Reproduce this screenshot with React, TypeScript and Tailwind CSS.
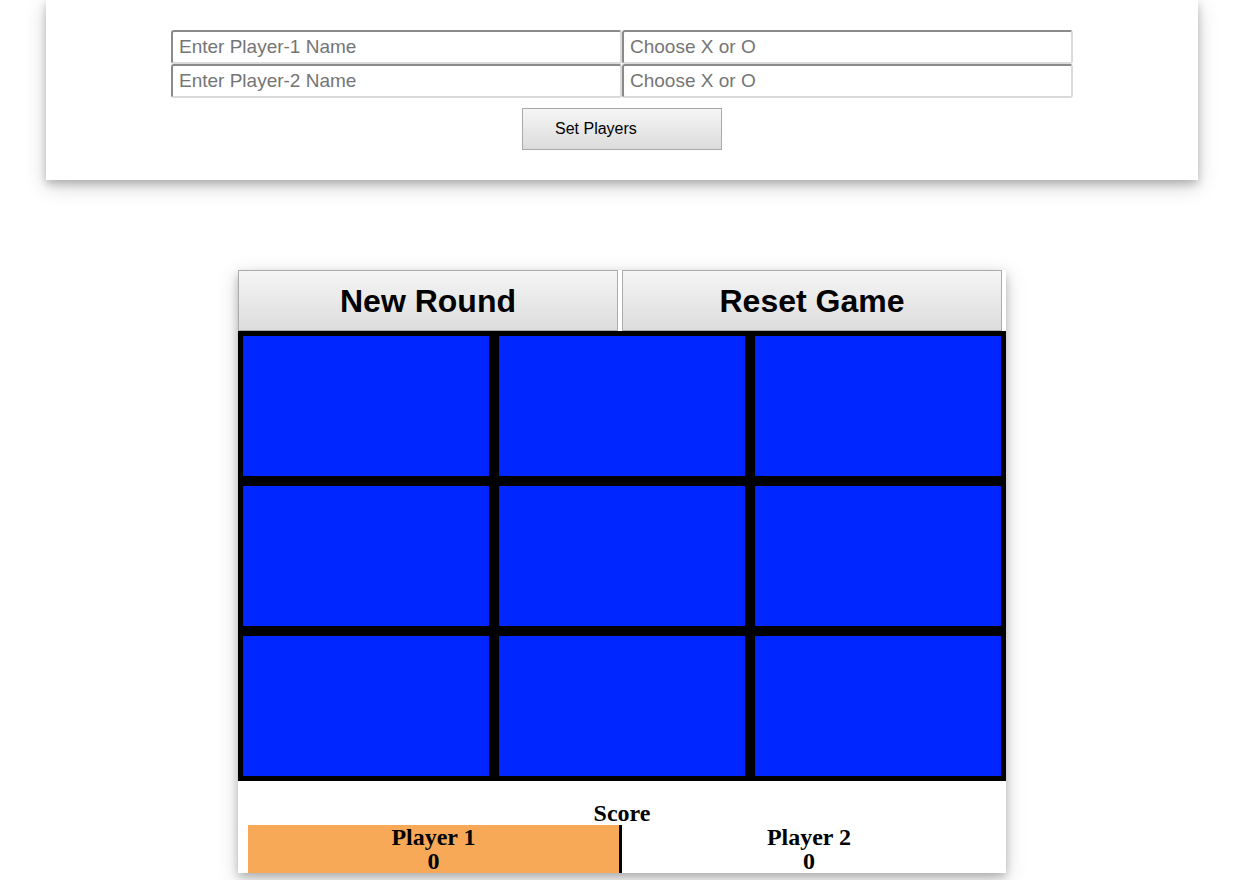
import React from 'react';

const inputCls =
  'h-[34px] w-[451px] rounded-[3px] border-2 border-t-[#8a8a8a] border-l-[#8a8a8a] border-r-[#dadada] border-b-[#dadada] bg-white px-[6px] text-[19px] text-black placeholder:text-[#757575] outline-none';

const cardShadow = 'shadow-[0_4px_8px_0_rgba(0,0,0,0.2),0_6px_20px_0_rgba(0,0,0,0.19)]';

export default function App() {
  const cells = Array.from({ length: 9 }, (_, i) => i);

  return (
    <div className="min-h-[880px] bg-white font-['Liberation_Sans',Arial,sans-serif]">
      <div className={`ml-[46px] flex h-[180px] w-[1152px] flex-col items-center bg-white pt-[30px] ${cardShadow}`}>
        <div className="flex flex-col">
          <div className="flex">
            <input className={inputCls} placeholder="Enter Player-1 Name" />
            <input className={inputCls} placeholder="Choose X or O" />
          </div>
          <div className="flex">
            <input className={inputCls} placeholder="Enter Player-2 Name" />
            <input className={inputCls} placeholder="Choose X or O" />
          </div>
        </div>
        <button
          type="button"
          className="mt-[10px] h-[42px] w-[200px] border border-[#a9a9a9] bg-gradient-to-b from-[#f5f5f5] to-[#dcdcdc] pl-[32px] text-left text-[16px] text-black"
        >
          Set Players
        </button>
      </div>

      <div className={`ml-[238px] mt-[90px] w-[768px] bg-white ${cardShadow}`}>
        <div className="flex gap-[4px]">
          {['New Round', 'Reset Game'].map((label) => (
            <button
              key={label}
              type="button"
              className="h-[61px] w-[380px] border border-[#ababab] bg-gradient-to-b from-[#f5f5f5] to-[#dddddd] text-[32px] font-bold text-black"
            >
              {label}
            </button>
          ))}
        </div>
        <div className="grid grid-cols-3 bg-black">
          {cells.map((c) => (
            <div key={c} className="h-[150px] border-[5px] border-black bg-[#0026ff]" />
          ))}
        </div>
        <div className="px-[10px] pt-[20px] font-['Liberation_Serif','Times_New_Roman',serif] text-[24px] font-bold leading-[24px] text-black">
          <div className="text-center">Score</div>
          <div className="flex">
            <div className="flex w-[371px] flex-col items-center bg-[#f8a958]">
              <span>Player 1</span>
              <span>0</span>
            </div>
            <div className="w-[3px] bg-black" />
            <div className="flex flex-1 flex-col items-center">
              <span>Player 2</span>
              <span>0</span>
            </div>
          </div>
        </div>
      </div>
    </div>
  );
}
